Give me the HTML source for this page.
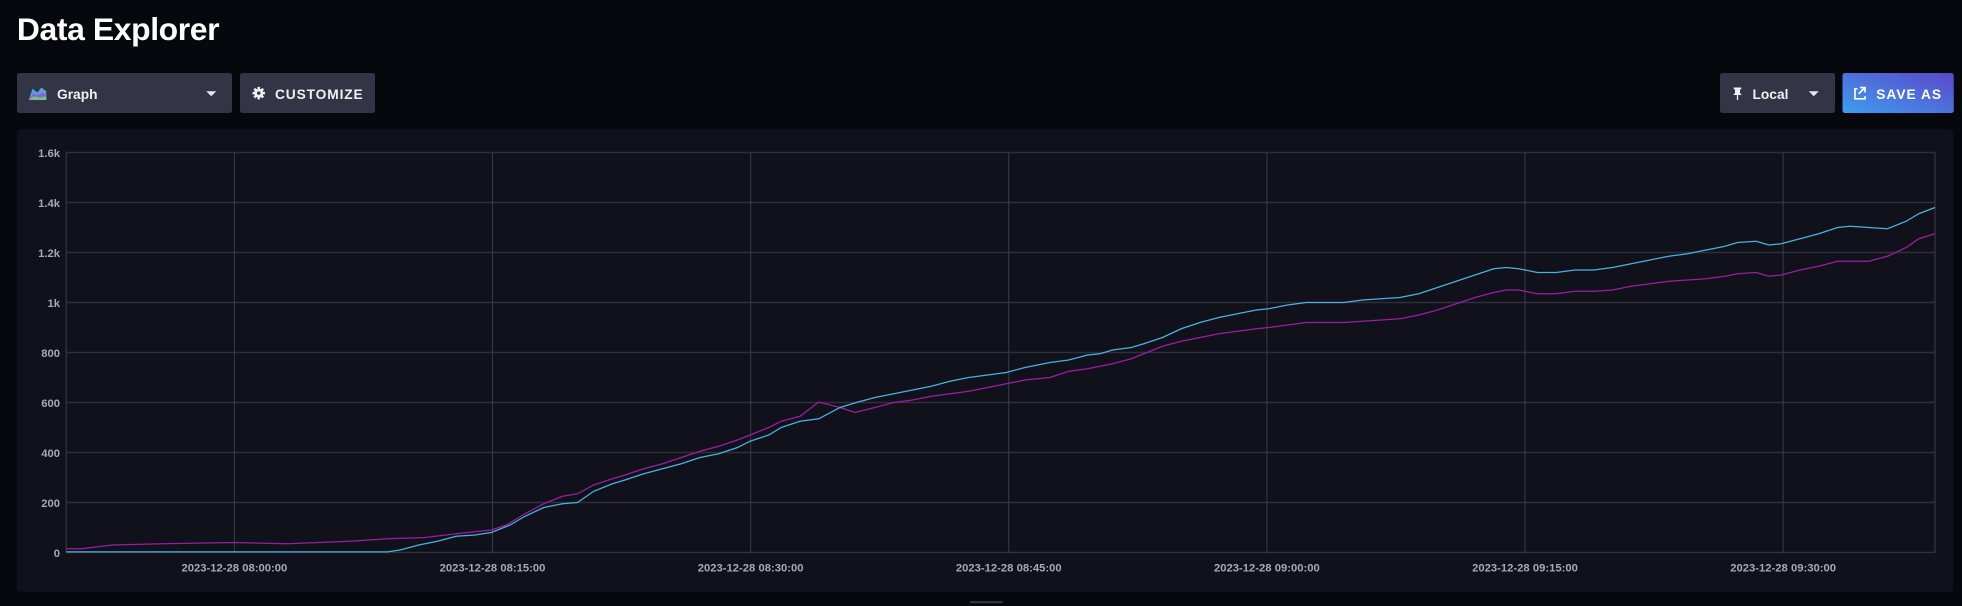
<!DOCTYPE html>
<html><head><meta charset="utf-8"><style>
html,body{margin:0;padding:0;background:#07080d;width:1962px;height:606px;overflow:hidden}
</style></head><body>
<svg width="1962" height="606" viewBox="0 0 1569.6 484.8" xmlns="http://www.w3.org/2000/svg" font-family="Liberation Sans, sans-serif">
<rect width="1569.6" height="484.8" fill="#07080d"/>
<text x="13.5" y="32" font-size="25.5" font-weight="bold" fill="#fff" letter-spacing="-0.3">Data Explorer</text>
<rect x="13.6" y="58.4" width="172" height="32" rx="2" fill="#343447"/>
<path d="M23 80 L26 71 L30 74 L33 70 L37 73 L37 80 Z" fill="#4aa8e0"/>
<path d="M23 80 L26 75 L30 76 L34 74 L37 76 L37 80 Z" fill="#9a5bd8"/>
<path d="M23 80 L27 77 L32 78 L37 77 L37 80 Z" fill="#6fc28a"/>
<text x="45.6" y="79" font-size="11" font-weight="bold" fill="#f0f0f5">Graph</text>
<path d="M165 73 L173 73 L169 77 Z" fill="#e8e8f0"/>
<rect x="192" y="58.4" width="108" height="32" rx="2" fill="#343447"/>
<g fill="#f0f0f5"><circle cx="207" cy="74.5" r="3.6"/>
<rect x="206" y="69.5" width="2" height="10"/><rect x="202" y="73.5" width="10" height="2"/>
<rect x="206" y="69.5" width="2" height="10" transform="rotate(45 207 74.5)"/><rect x="206" y="69.5" width="2" height="10" transform="rotate(-45 207 74.5)"/></g>
<circle cx="207" cy="74.5" r="1.4" fill="#343447"/>
<text x="220" y="79" font-size="11" font-weight="bold" fill="#f0f0f5" letter-spacing="0.7">CUSTOMIZE</text>
<rect x="1376" y="58.4" width="92" height="32" rx="2" fill="#343447"/>
<path d="M1387 70 h6 v1.5 h-1 v3 l1.5 1.5 h-3 v4 h-1 v-4 h-3 l1.5 -1.5 v-3 h-1z" fill="#f0f0f5"/>
<text x="1402" y="79" font-size="11" font-weight="bold" fill="#f0f0f5">Local</text>
<path d="M1447 73 L1455 73 L1451 77 Z" fill="#e8e8f0"/>
<defs><linearGradient id="g" x1="0" x2="1" y1="1" y2="0"><stop offset="0" stop-color="#3f9cf0"/><stop offset="1" stop-color="#5a48c8"/></linearGradient></defs>
<rect x="1474" y="58.4" width="89" height="32" rx="2" fill="url(#g)"/>
<path d="M1486 71 h-2 v8 h8 v-2 M1488 70 h4 v4 M1492 70 l-5 5" stroke="#fff" stroke-width="1.3" fill="none"/>
<text x="1501" y="79" font-size="11" font-weight="bold" fill="#fff" letter-spacing="0.8">SAVE AS</text>
<rect x="13.6" y="103.4" width="1549" height="370" rx="3" fill="#11111b"/>
<g stroke="#2e2e3c" stroke-width="1.2">
<line x1="53" y1="122" x2="1548" y2="122"/><line x1="53" y1="162" x2="1548" y2="162"/><line x1="53" y1="202" x2="1548" y2="202"/><line x1="53" y1="242" x2="1548" y2="242"/><line x1="53" y1="282" x2="1548" y2="282"/><line x1="53" y1="322" x2="1548" y2="322"/><line x1="53" y1="362" x2="1548" y2="362"/><line x1="53" y1="402" x2="1548" y2="402"/><line x1="53" y1="442" x2="1548" y2="442"/>
<line x1="53" y1="122" x2="53" y2="442"/><line x1="1548" y1="122" x2="1548" y2="442"/>
</g>
<g stroke="#3a3a4a" stroke-width="0.8">
<line x1="187.5" y1="122" x2="187.5" y2="442"/><line x1="394" y1="122" x2="394" y2="442"/><line x1="600.5" y1="122" x2="600.5" y2="442"/><line x1="807" y1="122" x2="807" y2="442"/><line x1="1013.5" y1="122" x2="1013.5" y2="442"/><line x1="1220" y1="122" x2="1220" y2="442"/><line x1="1426.5" y1="122" x2="1426.5" y2="442"/>
</g>
<g font-size="9" font-weight="bold" fill="#a8a8b8" text-anchor="end">
<text x="48" y="125.5">1.6k</text><text x="48" y="165.5">1.4k</text><text x="48" y="205.5">1.2k</text><text x="48" y="245.5">1k</text><text x="48" y="285.5">800</text><text x="48" y="325.5">600</text><text x="48" y="365.5">400</text><text x="48" y="405.5">200</text><text x="48" y="445.5">0</text>
</g>
<g font-size="9" font-weight="bold" fill="#a8a8b8" text-anchor="middle">
<text x="187.5" y="457">2023-12-28 08:00:00</text><text x="394" y="457">2023-12-28 08:15:00</text><text x="600.5" y="457">2023-12-28 08:30:00</text><text x="807" y="457">2023-12-28 08:45:00</text><text x="1013.5" y="457">2023-12-28 09:00:00</text><text x="1220" y="457">2023-12-28 09:15:00</text><text x="1426.5" y="457">2023-12-28 09:30:00</text>
</g>
<polyline fill="none" stroke="#9a1fa2" stroke-width="1" points="53,439 65,439 90,436 130,435 187,434 230,435 280,433 310,431 340,430 365,427 393,424 405,420 420,411 435,403 450,397 462,395 475,388 490,383 500,380 515,375 530,371 545,366 560,361 575,357 590,352 600,348 615,342 625,337 640,333 655,321.6 672,326 684,330 700,326 715,322 730,320 745,317 760,315 775,313 790,310 805,307 820,304 840,302 855,297 870,295 880,293 890,291 905,287 915,283 930,277 945,273 960,270 975,267 990,265 1005,263 1015,262 1030,260 1045,258 1060,258 1075,258 1090,257 1105,256 1120,255 1135,252 1150,248 1165,243 1180,238 1195,234 1205,232 1215,232 1230,235 1245,235 1260,233 1275,233 1290,232 1305,229 1320,227 1335,225 1350,224 1365,223 1380,221 1390,219 1405,218 1415,221 1425,220 1440,216 1455,213 1470,209 1480,209 1495,209 1510,205 1525,198 1535,191 1548,187"/>
<polyline fill="none" stroke="#4ab2de" stroke-width="1" points="53,441.5 310,441.5 320,440 335,436 350,433 365,429 380,428 393,426 408,420 420,413 435,406 450,403 462,402 475,393 490,387 500,384 515,379 530,375 545,371 560,366 575,363 590,358 600,353 615,348 625,342 640,337 655,335 672,326 685,322 700,318 715,315 730,312 745,309 760,305 775,302 790,300 805,298 820,294 840,290 855,288 870,284 880,283 890,280 905,278 915,275 930,270 945,263 960,258 975,254 990,251 1005,248 1015,247 1030,244 1045,242 1060,242 1075,242 1090,240 1105,239 1120,238 1135,235 1150,230 1165,225 1180,220 1195,215 1205,214 1215,215 1230,218 1245,218 1260,216 1275,216 1290,214 1305,211 1320,208 1335,205 1350,203 1365,200 1380,197 1390,194 1405,193 1415,196 1425,195 1440,191 1455,187 1470,182 1480,181 1495,182 1510,183 1525,177 1535,171 1548,166"/>
<rect x="776" y="481" width="26" height="1.5" fill="#3a3a4a"/>
</svg>
</body></html>
